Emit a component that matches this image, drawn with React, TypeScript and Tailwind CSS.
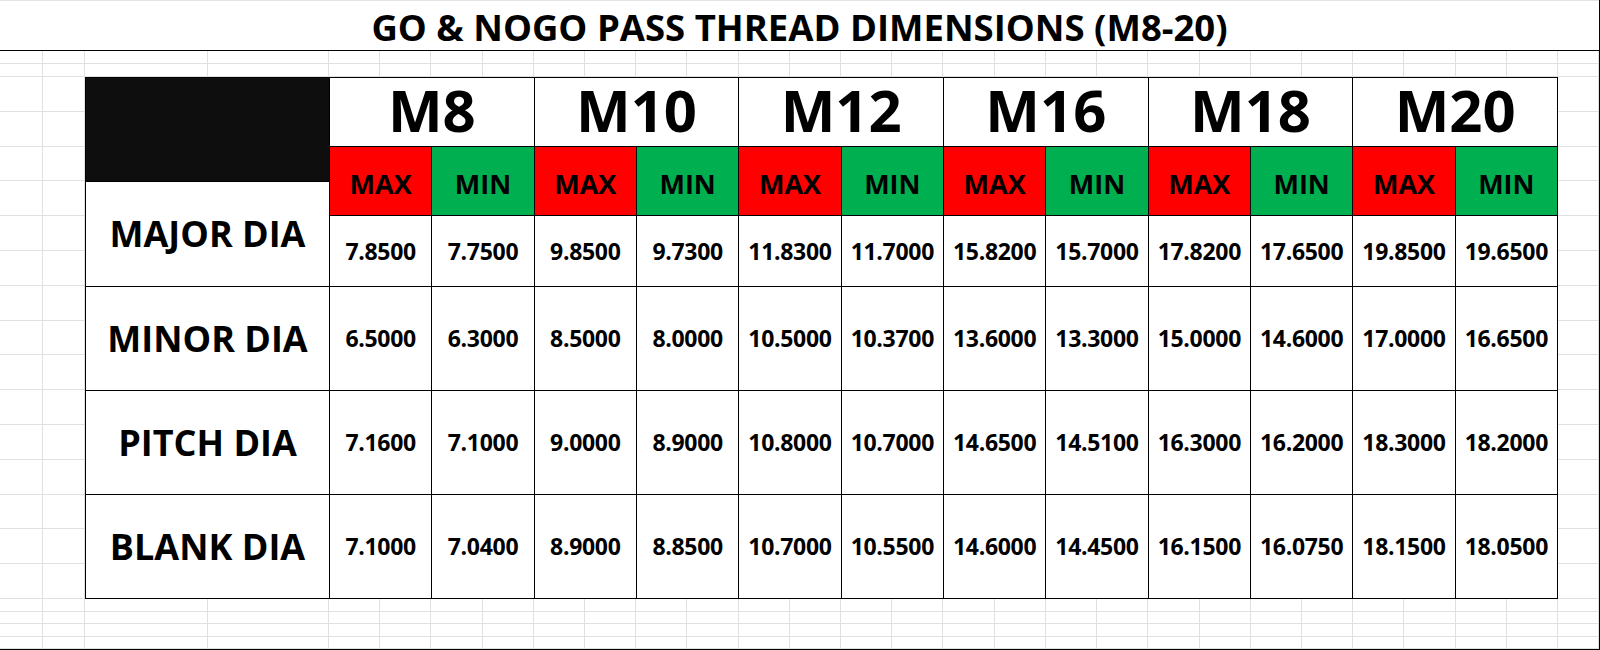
const sizes = ['M8', 'M10', 'M12', 'M16', 'M18', 'M20']

const rows = [
  {
    label: 'MAJOR DIA',
    values: ['7.8500', '7.7500', '9.8500', '9.7300', '11.8300', '11.7000', '15.8200', '15.7000', '17.8200', '17.6500', '19.8500', '19.6500'],
  },
  {
    label: 'MINOR DIA',
    values: ['6.5000', '6.3000', '8.5000', '8.0000', '10.5000', '10.3700', '13.6000', '13.3000', '15.0000', '14.6000', '17.0000', '16.6500'],
  },
  {
    label: 'PITCH DIA',
    values: ['7.1600', '7.1000', '9.0000', '8.9000', '10.8000', '10.7000', '14.6500', '14.5100', '16.3000', '16.2000', '18.3000', '18.2000'],
  },
  {
    label: 'BLANK DIA',
    values: ['7.1000', '7.0400', '8.9000', '8.8500', '10.7000', '10.5500', '14.6000', '14.4500', '16.1500', '16.0750', '18.1500', '18.0500'],
  },
]

// sheet is 29 cols x 21 rows; the table covers 26 x 15 of them
const EMPTY_CELLS = 29 * 21 - 26 * 15

function ThreadTable() {
  return (
    <div className="col-[3/span_26] row-[3/span_15] grid grid-cols-[244px_repeat(12,minmax(0,1fr))] grid-rows-[69px_35px_34px_71px_104px_104px_104px] border-l border-t border-black bg-white">
      <div className="row-span-2 border-r border-b border-black bg-[#0e0e0e]" />

      {sizes.map(s => (
        <div
          key={s}
          className="col-span-2 flex items-center justify-center border-r border-b border-black pb-1 text-[58px] font-bold leading-none text-black"
        >
          {s}
        </div>
      ))}

      {sizes.map(s => (
        <Pair key={s} />
      ))}

      {rows.map((r, i) => (
        <Row key={r.label} label={r.label} values={r.values} first={i === 0} />
      ))}
    </div>
  )
}

function Pair() {
  return (
    <>
      <div className="row-span-2 flex items-center justify-center border-r border-b border-black bg-[#ff0000] pt-1 text-[27px] font-bold leading-none text-black">
        MAX
      </div>
      <div className="row-span-2 flex items-center justify-center border-r border-b border-black bg-[#00b050] pt-1 text-[27px] font-bold leading-none text-black">
        MIN
      </div>
    </>
  )
}

function Row({ label, values, first }: { label: string; values: string[]; first: boolean }) {
  return (
    <>
      <div
        className={
          first
            ? 'row-span-2 flex items-center justify-center border-r border-b border-black text-[36px] font-bold leading-none text-black'
            : 'flex items-center justify-center border-r border-b border-black text-[36px] font-bold leading-none text-black'
        }
      >
        {label}
      </div>
      {values.map((v, j) => (
        <div
          key={j}
          className="flex items-center justify-center border-r border-b border-black text-[23px] font-bold leading-none tracking-[-0.3px] text-black"
        >
          {v}
        </div>
      ))}
    </>
  )
}

export default function App() {
  return (
    <div className="h-[650px] w-[1600px] overflow-hidden border-r border-b border-black bg-white font-['Open_Sans',sans-serif]">
      {/* Title row */}
      <div className="flex h-[51px] items-center justify-center border-t border-b border-t-[#e3e3e3] border-b-black pt-[4px]">
        <h1 className="text-[36.5px] font-bold leading-none text-black">
          GO &amp; NOGO PASS THREAD DIMENSIONS (M8-20)
        </h1>
      </div>

      {/* Sheet with gridlines */}
      <div className="grid h-[598px] grid-cols-[43px_42px_123px_121px_repeat(24,minmax(0,1fr))_41px] grid-rows-[13px_13px_repeat(15,minmax(0,1fr))_13px_12px_13px_12px]">
        <ThreadTable />
        {Array.from({ length: EMPTY_CELLS }).map((_, i) => (
          <div key={i} className="border-r border-b border-[#e0e0e0]" />
        ))}
      </div>
    </div>
  )
}
